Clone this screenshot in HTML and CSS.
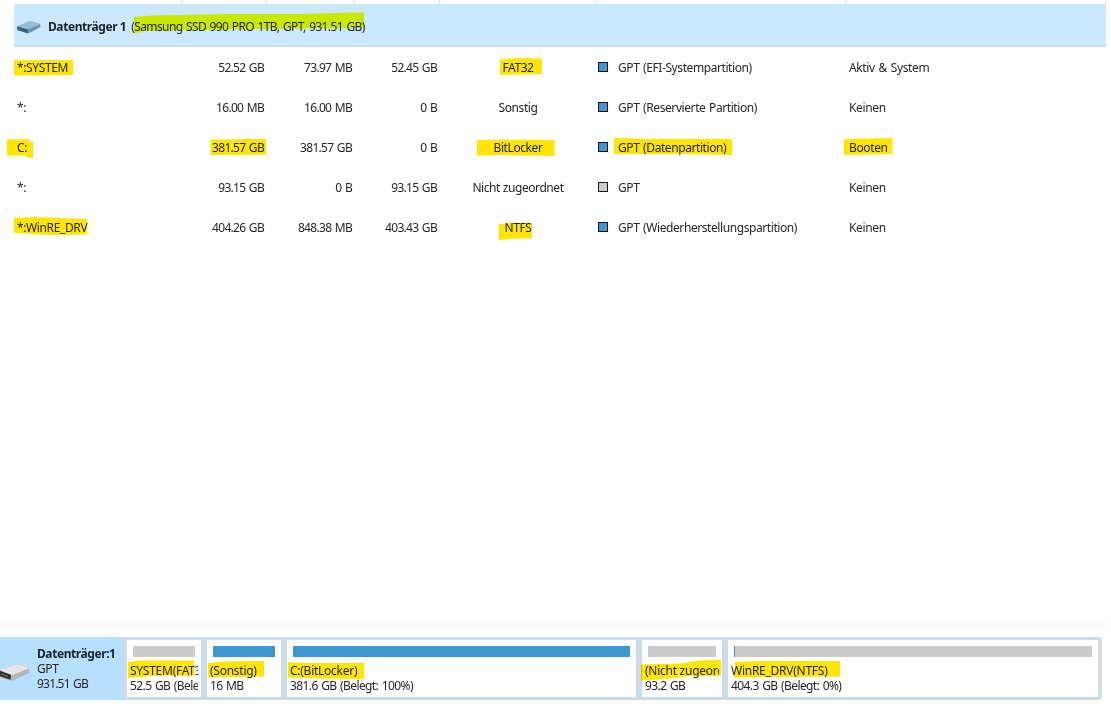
FILE: index.html
```
<!DOCTYPE html>
<html lang="de">
<head>
    <meta charset="UTF-8">
    <meta name="viewport" content="width=device-width, initial-scale=1.0">
    <title>Datenträger 1</title>
    <link rel="stylesheet" href="styles.css">
</head>
<body>
    <div class="partition-list">
        <div class="row columns">
            <span></span><span></span><span></span><span></span><span></span><span></span><span></span>
        </div>

        <div class="disk-title">
            <svg class="disk-icon" viewBox="0 0 24 13" width="24" height="13">
                <path d="M0 5.5 L12 0.5 Q13 0 14.5 0.3 L23 3 L23.5 6 L12 12.2 L10 12.3 L0.5 9 Z" fill="#6f93ad"/>
                <path d="M0 5.5 L12 0.5 Q13 0 14.5 0.3 L23.4 3 L11 8.5 Z" fill="#98bdd8"/>
                <path d="M0 5.5 L11 8.5 L11 12.3 L0.5 9 Z" fill="#3a627c"/>
            </svg>
            <strong>Datenträger 1</strong>
            <span class="disk-model">(Samsung SSD 990 PRO 1TB, GPT, 931.51 GB)</span>
        </div>

        <div class="row">
            <span class="name">*:SYSTEM</span>
            <span class="size">52.52 GB</span>
            <span class="size">73.97 MB</span>
            <span class="size">52.45 GB</span>
            <span class="fs">FAT32</span>
            <span class="type"><i class="box"></i>GPT (EFI-Systempartition)</span>
            <span class="status">Aktiv &amp; System</span>
        </div>
        <div class="row">
            <span class="name">*:</span>
            <span class="size">16.00 MB</span>
            <span class="size">16.00 MB</span>
            <span class="size">0 B</span>
            <span class="fs">Sonstig</span>
            <span class="type"><i class="box"></i>GPT (Reservierte Partition)</span>
            <span class="status">Keinen</span>
        </div>
        <div class="row">
            <span class="name">C:</span>
            <span class="size">381.57 GB</span>
            <span class="size">381.57 GB</span>
            <span class="size">0 B</span>
            <span class="fs">BitLocker</span>
            <span class="type"><i class="box"></i>GPT (Datenpartition)</span>
            <span class="status">Booten</span>
        </div>
        <div class="row">
            <span class="name">*:</span>
            <span class="size">93.15 GB</span>
            <span class="size">0 B</span>
            <span class="size">93.15 GB</span>
            <span class="fs">Nicht zugeordnet</span>
            <span class="type"><i class="box free"></i>GPT</span>
            <span class="status">Keinen</span>
        </div>
        <div class="row">
            <span class="name">*:WinRE_DRV</span>
            <span class="size">404.26 GB</span>
            <span class="size">848.38 MB</span>
            <span class="size">403.43 GB</span>
            <span class="fs">NTFS</span>
            <span class="type"><i class="box"></i>GPT (Wiederherstellungspartition)</span>
            <span class="status">Keinen</span>
        </div>
    </div>

    <div class="splitter"></div>

    <div class="disk-map">
        <div class="disk-info">
            <svg class="drive-icon" viewBox="0 0 30 18" width="30" height="18">
                <path d="M0 6 L15 1 Q17 0.3 19 0.8 L29 4 L29.3 9 L13 16.5 L9 16.3 L0 13 Z" fill="#b5b5b5"/>
                <path d="M0 6 L15 1 Q17 0.3 19 0.8 L29.3 4.3 L11 11.5 Z" fill="#e6e6e6"/>
                <path d="M0 6.8 L11 10.8 L10.5 15.8 L0 12.2 Z" fill="#303030"/>
                <path d="M1 10 L8 12.5" stroke="#777" stroke-width="1"/>
            </svg>
            <div>
                <strong>Datenträger:1</strong>
                <p>GPT</p>
                <p class="capacity">931.51 GB</p>
            </div>
        </div>
        <div class="parts">
            <div class="part">
                <div class="bar"></div>
                <p class="label">SYSTEM(FAT32)</p>
                <p>52.5 GB (Bele</p>
            </div>
            <div class="part">
                <div class="bar"><div class="used" style="width: 100%"></div></div>
                <p class="label">(Sonstig)</p>
                <p>16 MB</p>
            </div>
            <div class="part">
                <div class="bar"><div class="used" style="width: 100%"></div></div>
                <p class="label">C:(BitLocker)</p>
                <p>381.6 GB (Belegt: 100%)</p>
            </div>
            <div class="part">
                <div class="bar"></div>
                <p class="label">(Nicht zugeordnet)</p>
                <p>93.2 GB</p>
            </div>
            <div class="part">
                <div class="bar"><div class="used" style="width: 0.3%"></div></div>
                <p class="label">WinRE_DRV(NTFS)</p>
                <p>404.3 GB (Belegt: 0%)</p>
            </div>
        </div>
    </div>

    <!-- Textmarker -->
    <svg class="marker" viewBox="0 0 1111 717" width="1111" height="717">
        <path class="on-blue" d="M134 17 L150 15.5 L230 14 L300 14 L354 12.5 L364 12.5 L364 28 L260 29 L180 30 L142 31 L140 32.5 L134 33 Z"/>
        <path d="M14 60 L73 60 L73 75 L14 75.5 Z"/>
        <path d="M7 139.5 L29.7 139 L29.7 142 L33 142 L33 158 L26.3 157.3 L26 155.5 L7 155.8 Z"/>
        <path d="M210.5 139.5 L266 139 L266 154.7 L210.5 155 Z"/>
        <path d="M14 218 L35 217 L60 218 L87 219 L87 234.5 L50 235 L14 233 Z"/>
        <path d="M500 59.5 L517 58 L542 58.5 L542 74 L500 75 Z"/>
        <path d="M477 140 L520 139.5 L554.5 140 L554.5 156 L500 155 L477 155.7 Z"/>
        <path d="M614 138 L650 139 L732 139 L732 155 L680 154 L614 154 Z"/>
        <path d="M844 139 L892.5 138 L892.5 154 L844 155 Z"/>
        <path d="M499 224 L510 223 L532 223 L532 238.5 L515 238.5 L499 240 Z"/>
        <path d="M128 662 L140 660.5 L194 660.5 L194 676 L160 675.5 L128 678 Z"/>
        <path d="M208 663 L225 661.5 L264 661 L264 676.5 L208 677.5 Z"/>
        <path d="M288 662 L310 663 L364 663 L364 679 L320 678.5 L288 677.5 Z"/>
        <path d="M641 664.5 L680 663.5 L700 660.5 L721 660 L721 676 L690 676 L665 679 L641 680.5 Z"/>
        <path d="M735 662 L760 661 L840 661 L840 676.5 L734 677.5 Z"/>
    </svg>
</body>
</html>
```
FILE: styles.css
```
* {
    box-sizing: border-box;
}

body {
    position: relative;
    margin: 0;
    height: 717px;
    overflow: hidden;
    display: flex;
    flex-direction: column;
    background-color: #fff;
    color: #262626;
    font-family: "Noto Sans", "Open Sans", sans-serif;
    font-size: 12px;
    letter-spacing: -0.42px;
}

p {
    margin: 0;
}

strong {
    color: #16232e;
}

.partition-list {
    width: 1092px;
    height: 622px;
    margin-left: 14px;
}

.row {
    display: grid;
    grid-template-columns: 168px 85px 88px 85px 156px 250px 260px;
    align-items: center;
    height: 40px;
}

.columns {
    height: 4px;
    align-items: stretch;
}

.columns span {
    border-right: 1px solid #e2e2e2;
}

.disk-title {
    display: flex;
    align-items: center;
    height: 43px;
    padding: 2px 0 0 3px;
    background-color: #cce8ff;
    border-top: 1px solid #d5e5ee;
    border-bottom: 2px solid #c3dcee;
}

.disk-icon {
    margin: 3px 7px 0 0;
}

.disk-model {
    margin-left: 5px;
    letter-spacing: -0.62px;
    word-spacing: 1px;
}

.name {
    padding-left: 3px;
    letter-spacing: -0.38px;
}

.size {
    padding-right: 3px;
    text-align: right;
    letter-spacing: -0.7px;
    word-spacing: 1px;
}

.fs {
    text-align: center;
}

.type {
    display: flex;
    align-items: center;
    padding-left: 2px;
    letter-spacing: -0.42px;
    word-spacing: 1px;
}

.status {
    padding-left: 3px;
    letter-spacing: -0.36px;
    word-spacing: 1px;
}

.box {
    width: 10px;
    height: 10px;
    margin: -1px 10px 0 0;
    border: 1px solid #10151a;
    background-color: #3f96d0;
}

.box.free {
    background-color: #ccc;
}

.splitter {
    width: 1106px;
    height: 7px;
    margin-bottom: 8px;
    background-color: #f9f9f9;
}

.disk-map {
    display: flex;
    width: 1102px;
    height: 63px;
    line-height: 15px;
}

.disk-info {
    display: flex;
    width: 124px;
    padding-top: 9px;
    background-color: #b9dfff;
    white-space: nowrap;
}

.disk-info .capacity {
    letter-spacing: -0.8px;
    word-spacing: 1px;
}

.drive-icon {
    margin: 18px 7px 0 0;
}

.parts {
    flex: 1;
    display: grid;
    grid-template-columns: 74px 74px 349px 80px 370px;
    gap: 6px;
    padding: 3px 4px 3px 3px;
    border-radius: 0 4px 4px 0;
    background-color: #ccdce7;
}

.part {
    padding: 6px 3px 0;
    background-color: #fff;
    overflow: hidden;
    white-space: nowrap;
}

.part p {
    overflow: hidden;
    letter-spacing: -0.6px;
    word-spacing: 1px;
}

.part .label {
    letter-spacing: -0.26px;
    word-spacing: 0;
}

.bar {
    height: 11px;
    margin: 0 3px 6px;
    background-color: #ccc;
}

.used {
    height: 100%;
    background-color: #3f97d1;
}

.marker {
    position: absolute;
    top: 0;
    left: 0;
    fill: #ffe600;
    mix-blend-mode: multiply;
    pointer-events: none;
}

.marker .on-blue {
    fill: #faff00;
}
```
